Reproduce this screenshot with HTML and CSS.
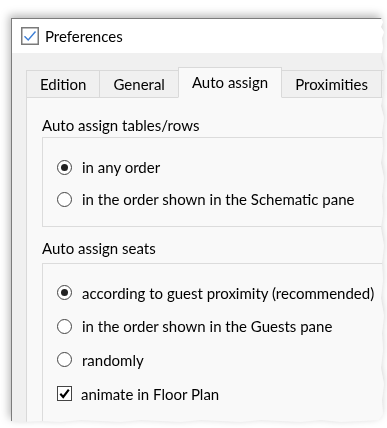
FILE: index.html
```html
<!DOCTYPE html>
<html>
<head>
<meta charset="utf-8">
<link rel="stylesheet" href="styles.css">
</head>
<body>
<div class="frame">
  <div class="window">
    <div class="titlebar">
      <span class="appcheck">
        <svg width="18" height="18" viewBox="0 0 18 18"><rect x="0.75" y="0.75" width="16.5" height="16.5" fill="#fff" stroke="#7a7a7a" stroke-width="1.5"/><path d="M3.5 9.2 L7.2 13 L14.5 4.5" fill="none" stroke="#3d7fd6" stroke-width="1.4"/></svg>
      </span>
      <span class="title">Preferences</span>
    </div>
    <div class="body">
      <div class="tabs">
        <div class="tab">Edition</div>
        <div class="tab">General</div>
        <div class="tab active">Auto assign</div>
        <div class="tab">Proximities</div>
        <div class="tab stub"></div>
      </div>
      <div class="panel">
        <div class="group-label">Auto assign tables/rows</div>
        <div class="group-box g1">
          <div class="row"><span class="radio on"></span><span>in any order</span></div>
          <div class="row"><span class="radio"></span><span>in the order shown in the Schematic pane</span></div>
        </div>
        <div class="group-label second">Auto assign seats</div>
        <div class="group-box g2">
          <div class="row"><span class="radio on"></span><span>according to guest proximity (recommended)</span></div>
          <div class="row"><span class="radio"></span><span>in the order shown in the Guests pane</span></div>
          <div class="row"><span class="radio"></span><span>randomly</span></div>
          <div class="row"><span class="check"><svg width="13" height="13" viewBox="0 0 13 13"><path d="M2.3 6.8 L5.2 10 L10.8 2.6" fill="none" stroke="#000" stroke-width="2.1"/></svg></span><span class="checklabel">animate in Floor Plan</span></div>
        </div>
      </div>
    </div>
  </div>
</div>
</body>
</html>
```
FILE: styles.css
```css
html, body {
  margin: 0;
  padding: 0;
  background: #fff;
  width: 387px;
  height: 428px;
  overflow: hidden;
}
body {
  font-family: Lato, "Noto Sans", sans-serif;
  font-size: 15px;
  color: #000;
}
.frame {
  padding: 18px 0 0 11px;
  filter: drop-shadow(-2px -3px 4px rgba(0, 0, 0, 0.28));
}
.window {
  width: 376px;
  height: 410px;
  box-sizing: border-box;
  border-left: 1px solid #7c7c7c;
  border-top: 1px solid #7c7c7c;
  background: #f0f0f0;
  overflow: hidden;
  clip-path: polygon(0 0, 370px 0, 372px 4px, 370px 9px, 373px 14px, 371px 20px, 372px 30px, 370px 40px, 373px 50px, 371px 62px, 372px 75px, 370px 88px, 373px 100px, 371px 115px, 372px 130px, 370px 145px, 373px 160px, 371px 178px, 372px 195px, 370px 210px, 373px 228px, 371px 245px, 372px 262px, 370px 280px, 373px 298px, 371px 315px, 372px 332px, 370px 350px, 373px 366px, 371px 382px, 372px 396px, 368px 402px, 350px 403px, 330px 404px, 310px 402px, 290px 404px, 270px 403px, 250px 402px, 230px 404px, 210px 403px, 190px 402px, 170px 404px, 150px 403px, 130px 402px, 110px 404px, 90px 403px, 70px 402px, 50px 404px, 30px 403px, 10px 404px, 0 403px);
}
.titlebar {
  height: 34px;
  background: #fff;
  display: flex;
  align-items: center;
  padding-left: 9px;
  gap: 6px;
}
.appcheck {
  display: flex;
  width: 18px;
  height: 18px;
}
.title {
  line-height: 20px;
}
.body {
  padding: 15px 0 0 14px;
}
.tabs {
  display: flex;
  align-items: flex-end;
  height: 30px;
  position: relative;
  z-index: 1;
  margin-bottom: -1px;
}
.tab {
  height: 28px;
  box-sizing: border-box;
  padding: 0 13px;
  border: 1px solid #d9d9d9;
  margin-left: -1px;
  background: #f0f0f0;
  display: flex;
  align-items: center;
  white-space: nowrap;
  line-height: 20px;
}
.tab:first-child {
  margin-left: 0;
}
.tab.stub {
  width: 40px;
  flex: none;
}
.tab.active {
  height: 31px;
  background: #f9f9f9;
  border-bottom-color: #f9f9f9;
  padding-bottom: 2px;
  position: relative;
}
.panel {
  background: #f9f9f9;
  border-left: 1px solid #d9d9d9;
  border-top: 1px solid #d9d9d9;
  padding: 17px 0 0 14px;
  height: 330px;
}
.group-label {
  line-height: 20px;
  padding-left: 1px;
}
.group-label.second {
  margin-top: 11px;
}
.group-box {
  margin-top: 2px;
  margin-left: 1px;
  border: 1px solid #dcdcdc;
  border-right: none;
  padding-left: 14px;
}
.g1 {
  padding-top: 13px;
  padding-bottom: 11px;
}
.g1 .row {
  height: 32px;
}
.g2 {
  margin-top: 5px;
  padding-top: 12px;
  padding-bottom: 16px;
}
.g2 .row {
  height: 33.6px;
}
.row {
  display: flex;
  align-items: center;
  gap: 10px;
  white-space: nowrap;
  line-height: 20px;
}
.radio {
  width: 15px;
  height: 15px;
  box-sizing: border-box;
  border: 1px solid #444;
  border-radius: 50%;
  background: #fff;
  display: flex;
  align-items: center;
  justify-content: center;
  flex: none;
}
.radio.on::after {
  content: "";
  width: 7px;
  height: 7px;
  border-radius: 50%;
  background: #222;
}
.check {
  width: 15px;
  height: 15px;
  box-sizing: border-box;
  border: 1px solid #444;
  background: #fff;
  display: flex;
  align-items: center;
  justify-content: center;
  flex: none;
}
.checklabel {
  margin-left: -1px;
}
```
